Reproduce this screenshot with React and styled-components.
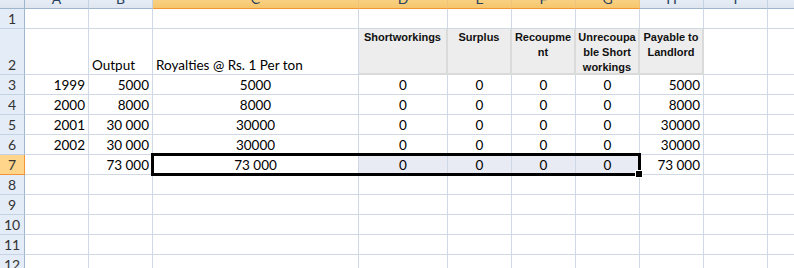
import React from 'react'
import styled, { createGlobalStyle, css } from 'styled-components'

const GlobalStyle = createGlobalStyle`
  html, body {
    margin: 0;
    padding: 0;
    background: #fff;
    overflow: hidden;
  }
`

const widths = [64, 64, 206, 89, 64, 64, 64, 64, 64, 64]
const letters = ['A', 'B', 'C', 'D', 'E', 'F', 'G', 'H', 'I', 'J']
const selectedCols = ['C', 'D', 'E', 'F', 'G']
const aligns = ['right', 'right', 'center', 'center', 'center', 'center', 'center', 'right', 'left', 'left']

// every part sits in its own grid slot so the selection frame can overlap them
const place = css`
  grid-row: ${(p) => p.$r};
  grid-column: ${(p) => p.$c};
`

const Sheet = styled.div`
  display: grid;
  grid-template-columns: 25px ${widths.map((w) => w + 'px').join(' ')};
  grid-template-rows: 21px 20px 46px repeat(10, 20px);
  margin-top: -12px;
  width: 794px;
  overflow: hidden;
  font-family: Lato, "Liberation Sans", sans-serif;
  font-size: 13.5px;
  color: #000;
`

const Corner = styled.div`
  ${place}
  box-sizing: border-box;
  background: linear-gradient(#f3f6fb, #dde5f0);
  border-right: 1px solid #9eb6ce;
  border-bottom: 1px solid #9eb6ce;
`

const ColHead = styled.div`
  ${place}
  box-sizing: border-box;
  display: flex;
  align-items: center;
  justify-content: center;
  font-size: 14px;
  color: #27415f;
  background: ${(p) => (p.$active ? 'linear-gradient(#fbe0a6, #f6c66c)' : 'linear-gradient(#f3f6fb, #dfe6f0)')};
  border-right: 1px solid ${(p) => (p.$active ? '#f2c27a' : '#c5d2e3')};
  border-bottom: 1px solid ${(p) => (p.$active ? '#f29536' : '#9eb6ce')};
`

const RowHead = styled.div`
  ${place}
  box-sizing: border-box;
  display: flex;
  align-items: flex-end;
  justify-content: center;
  padding-bottom: 1px;
  font-size: 14px;
  color: #333;
  background: ${(p) => (p.$active ? '#ffd58c' : '#e4ecf7')};
  border-right: 1px solid ${(p) => (p.$active ? '#f29536' : '#9eb6ce')};
  border-bottom: 1px solid ${(p) => (p.$active ? '#f29536' : '#c5d2e3')};
`

const Cell = styled.div`
  ${place}
  box-sizing: border-box;
  display: flex;
  align-items: flex-end;
  justify-content: ${(p) => (p.$align === 'right' ? 'flex-end' : p.$align === 'center' ? 'center' : 'flex-start')};
  padding: 0 3px 1px 3px;
  white-space: nowrap;
  overflow: hidden;
  background: ${(p) => p.$bg || '#fff'};
  border-right: 1px solid #d0d7e5;
  border-bottom: 1px solid #d0d7e5;
`

const HeadCell = styled.div`
  ${place}
  box-sizing: border-box;
  display: flex;
  flex-direction: column;
  align-items: center;
  padding-top: 1px;
  font-family: "Liberation Sans", Arial, sans-serif;
  font-weight: bold;
  font-size: 11px;
  line-height: 15px;
  color: #111;
  background: #ededed;
  border-right: 2px solid #dadada;
  border-bottom: 2px solid #dadada;
`

const Selection = styled.div`
  ${place}
  margin: -2px -1px -1px -2px;
  border: 3px solid #000;
  box-sizing: border-box;
  position: relative;
  z-index: 2;
  pointer-events: none;

  &::after {
    content: '';
    position: absolute;
    right: -5px;
    bottom: -5px;
    width: 6px;
    height: 6px;
    background: #000;
    border: 1px solid #fff;
  }
`

const headers = {
  D: ['Shortworkings'],
  E: ['Surplus'],
  F: ['Recoupme', 'nt'],
  G: ['Unrecoupa', 'ble Short', 'workings'],
  H: ['Payable to', 'Landlord'],
}

const data = {
  2: { B: 'Output', C: 'Royalties @ Rs. 1 Per ton' },
  3: { A: '1999', B: '5000', C: '5000', D: '0', E: '0', F: '0', G: '0', H: '5000' },
  4: { A: '2000', B: '8000', C: '8000', D: '0', E: '0', F: '0', G: '0', H: '8000' },
  5: { A: '2001', B: '30 000', C: '30000', D: '0', E: '0', F: '0', G: '0', H: '30000' },
  6: { A: '2002', B: '30 000', C: '30000', D: '0', E: '0', F: '0', G: '0', H: '30000' },
  7: { B: '73 000', C: '73 000', D: '0', E: '0', F: '0', G: '0', H: '73 000' },
}

const rows = [1, 2, 3, 4, 5, 6, 7, 8, 9, 10, 11, 12]

function renderCell(row, col, i) {
  const key = row + col
  const r = row + 1
  const c = i + 2
  if (row === 2 && headers[col]) {
    return (
      <HeadCell key={key} $r={r} $c={c}>
        {headers[col].map((line) => (
          <span key={line}>{line}</span>
        ))}
      </HeadCell>
    )
  }
  const value = (data[row] && data[row][col]) || ''
  const align = row === 2 ? 'left' : aligns[i]
  const inSelection = row === 7 && ['D', 'E', 'F', 'G'].includes(col)
  return (
    <Cell key={key} $r={r} $c={c} $align={align} $bg={inSelection ? '#e8eaf4' : null}>
      {value}
    </Cell>
  )
}

export default function App() {
  return (
    <>
      <GlobalStyle />
      <Sheet>
        <Corner $r={1} $c={1} />
        {letters.map((l, i) => (
          <ColHead key={l} $r={1} $c={i + 2} $active={selectedCols.includes(l)}>
            {l}
          </ColHead>
        ))}
        {rows.map((row) => (
          <React.Fragment key={row}>
            <RowHead $r={row + 1} $c={1} $active={row === 7}>
              {row}
            </RowHead>
            {letters.map((col, i) => renderCell(row, col, i))}
          </React.Fragment>
        ))}
        <Selection $r={8} $c="4 / 9" />
      </Sheet>
    </>
  )
}
